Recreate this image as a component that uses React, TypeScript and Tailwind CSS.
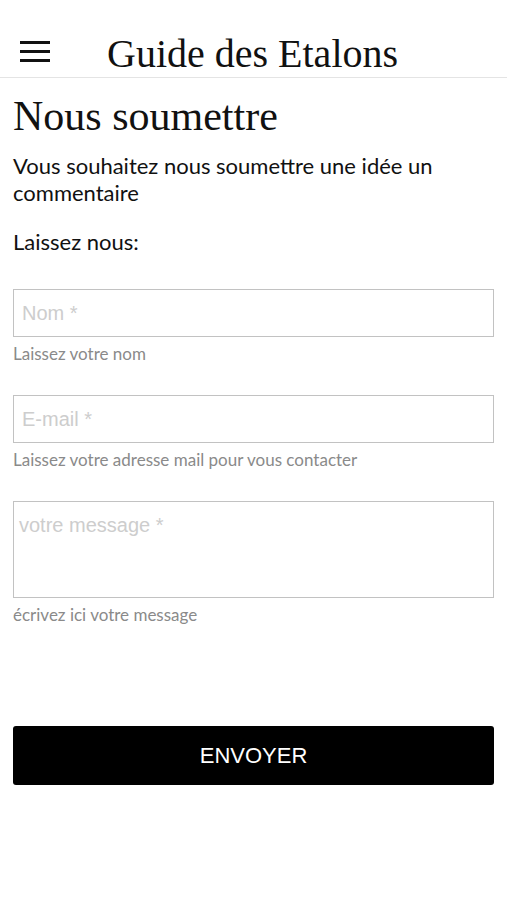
import React from "react";

export default function App() {
  return (
    <div className="w-[507px] min-h-[900px] bg-white text-black">
      <header className="flex h-[78px] items-start border-b border-[#e4e4e4]">
        <div className="ml-5 mt-[41px] flex h-[21px] w-[30px] flex-col justify-between">
          <div className="h-[3px] w-full bg-[#111]" />
          <div className="h-[3px] w-full bg-[#111]" />
          <div className="h-[3px] w-full bg-[#111]" />
        </div>
        <h1 className="ml-[57px] mt-[30px] font-['Liberation_Serif',serif] text-[40px] leading-[48px] text-[#111]">
          Guide des Etalons
        </h1>
      </header>
      <main className="px-[13px]">
        <h2 className="mt-[14px] font-['Liberation_Serif',serif] text-[42px] leading-[48px] text-[#111]">
          Nous soumettre
        </h2>
        <p className="mt-[12px] font-['Lato',sans-serif] text-[22px] leading-[27px] text-[#111]">
          Vous souhaitez nous soumettre une idée un commentaire
        </p>
        <p className="mt-[22px] font-['Lato',sans-serif] text-[22px] leading-[27px] text-[#111]">
          Laissez nous:
        </p>

        <div className="mt-[34px] flex h-[48px] items-center border border-[#c2c2c2] pl-2">
          <span className="font-['Liberation_Sans',sans-serif] text-[20px] text-[#cdcdcd]">Nom *</span>
        </div>
        <p className="mt-[7px] font-['Lato',sans-serif] text-[17px] leading-[20px] text-[#8a8a8a]">
          Laissez votre nom
        </p>

        <div className="mt-[31px] flex h-[48px] items-center border border-[#c2c2c2] pl-2">
          <span className="font-['Liberation_Sans',sans-serif] text-[20px] text-[#cdcdcd]">E-mail *</span>
        </div>
        <p className="mt-[7px] font-['Lato',sans-serif] text-[17px] leading-[20px] text-[#8a8a8a]">
          Laissez votre adresse mail pour vous contacter
        </p>

        <div className="mt-[31px] h-[97px] border border-[#c2c2c2] pl-[5px] pt-[11px]">
          <span className="font-['Liberation_Sans',sans-serif] text-[20px] leading-[24px] text-[#cdcdcd]">votre message *</span>
        </div>
        <p className="mt-[7px] font-['Lato',sans-serif] text-[17px] leading-[20px] text-[#8a8a8a]">
          écrivez ici votre message
        </p>

        <button className="mt-[101px] flex h-[59px] w-full items-center justify-center rounded-[3px] bg-black font-['Liberation_Sans',sans-serif] text-[22px] text-white">
          ENVOYER
        </button>
      </main>
    </div>
  );
}
